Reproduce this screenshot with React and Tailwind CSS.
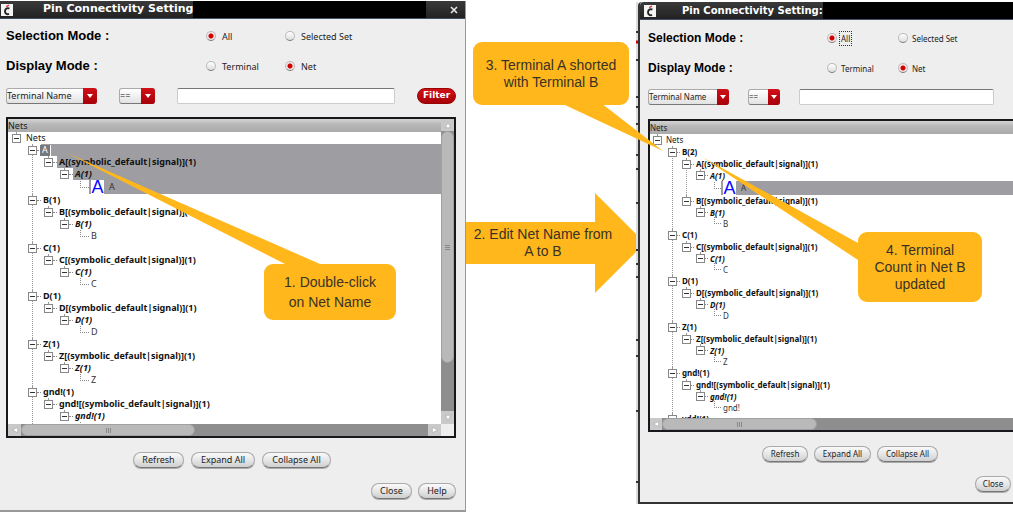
import React from "react";
import clsx from "clsx";

const UI = "font-['Noto_Sans',sans-serif]";

const branch = (n, extra = {}) => ({
  label: `${n}(1)`,
  bold: true,
  children: [signal(n)],
  ...extra,
});

function signal(n, extra = {}) {
  return {
    label: `${n}[(symbolic_default|signal)](1)`,
    bold: true,
    selected: extra.selected,
    children: [
      {
        label: `${n}(1)`,
        bold: true,
        italic: true,
        selected: extra.selected,
        children: [{ label: n, selected: extra.selected || extra.leafSelected, glyph: extra.glyph }],
      },
    ],
  };
}

const beforeTree = [
  { label: "A", editing: true, selected: true, children: [signal("A", { selected: true, glyph: true })] },
  branch("B"),
  branch("C"),
  branch("D"),
  branch("Z"),
  branch("gnd!", { more: true }),
];

const afterTree = [
  {
    label: "B(2)",
    bold: true,
    children: [signal("A", { leafSelected: true, glyph: true }), signal("B")],
  },
  branch("C"),
  branch("D"),
  branch("Z"),
  branch("gnd!"),
  { label: "vdd!(1)", bold: true, more: true, children: [] },
];

function Logo() {
  return (
    <svg viewBox="0 0 12 12" className="size-3 shrink-0" aria-hidden="true">
      <rect width="12" height="12" fill="#f4f4f4" />
      <path d="M8.4 4.6C6.2 3.4 4 4.9 4 7.2s1.900 3.700 4 2.700" fill="none" stroke="#222" strokeWidth="1.900" />
      <path d="M5.200 2.600 8 1.200" stroke="#d33" strokeWidth="1.300" />
    </svg>
  );
}

function Expander() {
  return (
    <button
      type="button"
      aria-label="Collapse"
      className="relative flex size-[9px] shrink-0 items-center justify-center border border-[#888] bg-white before:absolute before:-top-[3px] before:left-[3px] before:h-[2px] before:w-px before:bg-[#999]"
    >
      <span className="h-px w-[5px] bg-[#333]" />
    </button>
  );
}

function Node({ node, small, last, depth }) {
  const leaf = !node.children;
  const rowHeight = leaf && node.glyph ? "h-[14px]" : small && depth >= 2 ? "h-[11px]" : "h-3";
  return (
    <li
      className={clsx(
        "border-l border-dotted",
        last && !node.more ? "border-transparent" : "border-[#999]",
      )}
    >
      <div className={clsx("-ml-[5px] flex items-center", rowHeight)}>
        {leaf ? (
          <span
            className={clsx(
              "mb-[6px] ml-1 h-[7px] shrink-0 border-b border-l border-dotted border-[#888]",
              small ? "w-[7px]" : "w-[9px]",
            )}
          />
        ) : (
          <>
            <Expander />
            <span className={clsx("shrink-0 border-t border-dotted border-[#888]", small ? "w-[3px]" : "w-1")} />
          </>
        )}
        <span
          className={clsx(
            "flex h-full min-w-0 flex-1 items-center whitespace-nowrap pl-[2px]",
            node.selected && "bg-[#9d9da2]",
            node.bold && "font-bold",
            node.italic && "italic",
            leaf ? "text-[#333]" : "text-[#111]",
          )}
        >
          {node.glyph && (
            <span className="mr-[5px] flex h-[14px] w-[13px] items-center justify-center bg-white font-['Liberation_Sans',sans-serif] text-[18px] leading-[14px] text-[#0a0aff]">
              A
            </span>
          )}
          {node.editing ? (
            <input
              aria-label="Net name"
              defaultValue={node.label}
              className="-ml-[3px] h-[11px] w-[11px] border-r border-white bg-[#77777c] pl-[2px] text-white outline-none"
            />
          ) : (
            node.label
          )}
        </span>
      </div>
      {node.children && (
        <ul className={clsx(small ? "ml-[13px]" : "ml-[15px]")}>
          {node.children.map((c, i) => (
            <Node key={i} node={c} small={small} depth={depth + 1} last={i === node.children.length - 1} />
          ))}
        </ul>
      )}
    </li>
  );
}

function Radio({ name, label, checked, focused, small }) {
  return (
    <label className={clsx("flex items-center whitespace-nowrap", small ? "gap-0.5" : "gap-1")}>
      <input
        type="radio"
        name={name}
        defaultChecked={checked}
        className="size-[10px] shrink-0 appearance-none rounded-full border border-[#bbb] border-b-[#777] bg-[linear-gradient(#fff,#ddd)] checked:bg-[radial-gradient(circle,#d00000_0_2px,#f4e4e4_3px)]"
      />
      <span className={clsx("border border-dotted px-px leading-[13px]", focused ? "border-[#333]" : "border-transparent")}>
        {label}
      </span>
    </label>
  );
}

function ModeRow({ id, title, options, small }) {
  return (
    <div
      role="radiogroup"
      aria-label={title}
      className={clsx(
        "grid h-[30px] items-center",
        small ? "grid-cols-[179px_71px_1fr]" : "grid-cols-[200px_79px_1fr]",
      )}
    >
      <span
        className={clsx(
          "whitespace-nowrap font-['Liberation_Sans',sans-serif] font-bold text-black",
          small ? "text-[12px]" : "text-[13px]",
        )}
      >
        {title} :
      </span>
      {options.map((o) => (
        <Radio key={o.label} name={id} small={small} {...o} />
      ))}
    </div>
  );
}

function Combo({ label, value, className, small }) {
  return (
    <div className={clsx("relative h-4 shrink-0", className)}>
      <select
        aria-label={label}
        className="size-full appearance-none rounded-[3px] border border-[#aaa] border-b-[#777] bg-[linear-gradient(#fff,#e2e2e2)] text-[#222]"
      >
        <option>{value}</option>
      </select>
      <span
        className={clsx(
          "pointer-events-none absolute inset-y-0 right-0 flex items-center justify-center rounded-r-[3px] bg-[linear-gradient(#d01018,#a80008)]",
          small ? "w-3" : "w-[14px]",
        )}
      >
        <svg viewBox="0 0 6 4" className="h-1 w-1.5" aria-hidden="true">
          <path d="M0 0h6L3 4z" fill="#fff" />
        </svg>
      </span>
    </div>
  );
}

function PushButton({ children, className }) {
  return (
    <button
      type="button"
      className={clsx(
        "h-4 whitespace-nowrap rounded-full border border-[#aaa] border-b-[#777] bg-[linear-gradient(#fafafa,#e4e4e4_55%,#cfcfcf)] text-[#222] shadow-[0_1px_0_#aaa]",
        className,
      )}
    >
      {children}
    </button>
  );
}

function ArrowBox({ d, className }) {
  return (
    <span className={clsx("flex shrink-0 items-center justify-center bg-[#c9c9c9]", className)}>
      <svg viewBox="0 0 6 6" className="size-2" aria-hidden="true">
        <path d={d} fill="#fff" stroke="#999" strokeWidth="0.4" />
      </svg>
    </span>
  );
}

function Grip({ vertical }) {
  return (
    <span className={clsx("flex gap-px", vertical && "flex-col")}>
      {[0, 1, 2].map((i) => (
        <span key={i} className={clsx("bg-[#888]", vertical ? "h-px w-[5px]" : "h-[5px] w-px")} />
      ))}
    </span>
  );
}

function NetTree({ nodes, small }) {
  return (
    <div
      className={clsx(
        "flex border-2 border-[#16181c] bg-white",
        small ? "h-[313px] border-r-0" : "h-[321px]",
      )}
    >
      <div className="flex min-w-0 flex-1 flex-col">
        <div className="h-[13px] shrink-0 bg-[linear-gradient(#d4d4d4,#b8b8b8_40%,#aaaaaa)] text-[#222] leading-[14px]">
          Nets
        </div>
        <div className="min-h-0 flex-1 overflow-hidden">
          <div className={clsx("flex h-3 items-center gap-1 text-[#222]", small ? "pl-[3px]" : "pl-1")}>
            <Expander />
            <span className={clsx(small ? "" : "pl-px")}>Nets</span>
          </div>
          <ul className={clsx(small ? "ml-[22px]" : "ml-6")}>
            {nodes.map((n, i) => (
              <Node key={i} node={n} small={small} depth={0} last={i === nodes.length - 1} />
            ))}
          </ul>
        </div>
        <div className="flex h-3 shrink-0 bg-[#8e8e8e]">
          <ArrowBox className={small ? "w-3" : "w-[13px]"} d="M5 1v4L1 3z" />
          <span
            className={clsx(
              "flex items-center justify-center rounded-full border border-[#a0a0a0] bg-[#b9b9b9]",
              small ? "w-[155px]" : "w-[174px]",
            )}
          >
            <Grip />
          </span>
          {!small && <ArrowBox className="ml-auto w-[13px]" d="M1 1v4l4-2z" />}
        </div>
      </div>
      {!small && (
        <div className="flex w-[13px] flex-col bg-[#8e8e8e]">
          <ArrowBox className="h-3" d="M1 5h4L3 1z" />
          <span className="flex h-[232px] items-center justify-center rounded-full border border-[#a0a0a0] bg-[#b9b9b9]">
            <Grip vertical />
          </span>
          <ArrowBox className="mt-auto h-[13px]" d="M1 1h4L3 5z" />
          <span className="h-3 bg-[#eeeeee]" />
        </div>
      )}
    </div>
  );
}

function PinDialog({ id, small, title, nodes, className }) {
  return (
    <section className={clsx("flex min-w-0 flex-col bg-[#eeeeee]", UI, small ? "text-[8px]" : "text-[9px]", className)}>
      <header
        className={clsx(
          "flex h-[18px] items-stretch border-b border-[#3f5068] bg-[linear-gradient(#3a3a3a,#222222)] text-white",
          small && "rounded-tl-[4px]",
        )}
      >
        <div className={clsx("flex flex-1 items-center", small ? "pl-1" : "pl-px")}>
          <Logo />
          <h1
            className={clsx(
              "flex h-full items-center whitespace-nowrap font-['DejaVu_Sans',sans-serif] font-bold",
              small ? "ml-[26px] text-[10px]" : "ml-[30px] text-[11px]",
            )}
          >
            {title}
          </h1>
          <span className="h-full flex-1 bg-black" />
        </div>
        {!small && (
          <button type="button" aria-label="Close window" className="flex w-[39px] items-center justify-center pl-4">
            <svg viewBox="0 0 8 8" className="size-2" aria-hidden="true">
              <path d="M1 1l6 6M7 1 1 7" stroke="#e8e8e8" strokeWidth="1.600" />
            </svg>
          </button>
        )}
      </header>
      <div className={clsx("flex flex-1 flex-col", small ? "pl-2" : "pl-[6px] pr-[9px]")}>
        <div className={clsx("text-[#222]", small ? "pt-[3px]" : "pt-[2px]")}>
          <ModeRow
            id={`${id}-selection`}
            title="Selection Mode"
            small={small}
            options={[{ label: "All", checked: true, focused: small }, { label: "Selected Set" }]}
          />
          <ModeRow
            id={`${id}-display`}
            title="Display Mode"
            small={small}
            options={[{ label: "Terminal" }, { label: "Net", checked: true }]}
          />
        </div>
        <div className={clsx("flex items-center", small ? "mt-[6px] gap-[19px] pr-[19px]" : "mt-[7px] gap-[22px]")}>
          <Combo label="Filter field" value="Terminal Name" small={small} className={small ? "w-[81px]" : "w-[91px]"} />
          <Combo label="Operator" value="==" small={small} className={small ? "w-8" : "w-9"} />
          <input
            aria-label="Filter text"
            className="h-4 min-w-0 flex-1 rounded-[2px] border border-[#ccc] border-t-[#777] bg-white px-1"
          />
          {!small && (
            <button
              type="button"
              className="h-4 w-[39px] rounded-full border border-[#900] bg-[linear-gradient(#d01018,#a80008)] font-['DejaVu_Sans',sans-serif] font-bold text-white"
            >
              Filter
            </button>
          )}
        </div>
        <div className={small ? "mt-[14px]" : "mt-[13px]"}>
          <NetTree nodes={nodes} small={small} />
        </div>
        <div className={clsx("flex", small ? "mt-[14px] gap-[6px] pl-[114px]" : "mt-[14px] gap-[7px] pl-[127px]")}>
          <PushButton className={small ? "w-[46px]" : "w-[51px]"}>Refresh</PushButton>
          <PushButton className={small ? "w-[57px]" : "w-16"}>Expand All</PushButton>
          <PushButton className={small ? "w-[61px]" : "w-[69px]"}>Collapse All</PushButton>
        </div>
        <div className={clsx("flex justify-end", small ? "mt-[14px] pr-[2px] pb-[10px]" : "mt-[15px] gap-[6px] pb-[11px]")}>
          <PushButton className={small ? "w-9" : "w-[41px]"}>Close</PushButton>
          {!small && <PushButton className="w-[38px]">Help</PushButton>}
        </div>
      </div>
    </section>
  );
}

function Callout({ children, className, tail, tailClass, viewBox }) {
  return (
    <>
      <svg viewBox={viewBox} className={clsx("pointer-events-none absolute", tailClass)} aria-hidden="true">
        <polygon points={tail} fill="#ffb71b" />
      </svg>
      <aside
        className={clsx(
          "absolute flex flex-col items-center justify-center rounded-[9px] bg-[#ffb71b] text-center text-[14px] text-[#3a3226]",
          className,
        )}
      >
        {children}
      </aside>
    </>
  );
}

export default function App() {
  return (
    <main className="relative grid grid-cols-[466fr_170fr_377fr] items-start overflow-hidden bg-white font-['Liberation_Sans',sans-serif]">
      <PinDialog
        id="before"
        title="Pin Connectivity Setting"
        nodes={beforeTree}
        className="mt-px border-r border-b-2 border-[#999]"
      />
      <div className="relative mt-[193px] flex h-[100px] items-center">
        <svg viewBox="0 0 170 100" preserveAspectRatio="none" className="absolute inset-0 size-full" aria-hidden="true">
          <path d="M0 29H129V0L170 41V59L129 100V71H0z" fill="#ffb71b" />
        </svg>
        <p className="relative w-full whitespace-nowrap pr-4 text-center text-[14px] leading-[17px] text-[#3a3226]">
          2. Edit Net Name from
          <br />A to B
        </p>
      </div>
      <div className="mt-[2px] flex overflow-hidden">
        <svg viewBox="0 0 2 502" className="h-[502px] w-[2px] shrink-0" aria-hidden="true">
          <rect width="2" height="502" fill="#dcdcdc" />
          <path
            d="M0 30h2M0 58h2M0 95h2M0 105h2M0 122h2M0 153h2M0 167h2M0 201h2M0 248h2M0 262h2M0 275h2M0 338h2M0 354h2M0 409h2M0 480h2"
            stroke="#333"
            strokeWidth="2"
          />
          <path d="M0 40h2" stroke="#c00" strokeWidth="3" />
        </svg>
        <PinDialog
          id="after"
          small
          title="Pin Connectivity Setting:"
          nodes={afterTree}
          className="flex-1 rounded-tl-[4px] border-b-2 border-l-2 border-[#333]"
        />
      </div>

      <Callout
        className="left-[264px] top-[264px] h-[56px] w-[132px] leading-[20px]"
        viewBox="0 0 254 113"
        tailClass="left-[67px] top-[153px] h-[113px] w-[254px]"
        tail="0,0 253,111 253,113 220,113 218,111"
      >
        <p>
          1. Double-click
          <br />
          on Net Name
        </p>
      </Callout>
      <Callout
        className="left-[473px] top-[42px] h-[63px] w-[156px] leading-[17px]"
        viewBox="0 0 100 48"
        tailClass="left-[563px] top-[103px] h-[48px] w-[100px]"
        tail="0,0 38,0 100,48 2,2"
      >
        <p>
          3. Terminal A shorted
          <br />
          with Terminal B
        </p>
      </Callout>
      <Callout
        className="left-[858px] top-[232px] h-[70px] w-[124px] leading-[17px]"
        viewBox="0 0 160 105"
        tailClass="left-[702px] top-[157px] h-[105px] w-[160px]"
        tail="0,0 156,86 160,88 160,105 156,103"
      >
        <p>
          4. Terminal
          <br />
          Count in Net B
          <br />
          updated
        </p>
      </Callout>
    </main>
  );
}
